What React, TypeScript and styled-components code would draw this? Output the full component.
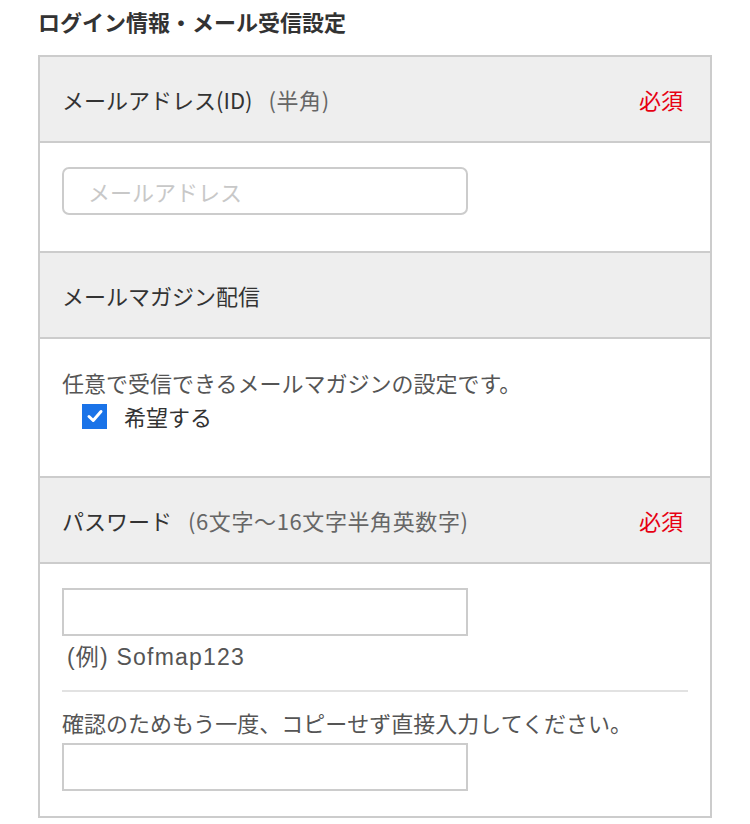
import React from "react";
import styled, { createGlobalStyle } from "styled-components";

const Global = createGlobalStyle`
  html, body { margin: 0; padding: 0; background: #fff; }
  body {
    font-family: "Noto Sans CJK JP", "Noto Sans", sans-serif;
    color: #333;
  }
  * { box-sizing: border-box; }
`;

const Page = styled.div`
  padding: 3px 38px 0 38px;
  width: 750px;
`;

const Title = styled.h2`
  margin: 0 0 16px 0;
  font-size: 22px;
  line-height: 36px;
  font-weight: 700;
  color: #333;
`;

const Box = styled.div`
  border: 2px solid #ccc;
  border-bottom: none;
`;

const Header = styled.div`
  display: flex;
  align-items: center;
  justify-content: space-between;
  height: 86px;
  padding: 0 27px 0 22px;
  background: #eeeeee;
  border-bottom: 2px solid #ccc;
  font-size: 22px;
  color: #333;
`;

const Sub = styled.span`
  color: #666;
  margin-left: 16px;
  letter-spacing: 0.6px;
`;

const Required = styled.span`
  color: #e60012;
  font-size: 22px;
`;

const Body = styled.div<{ $pt: number; $pb: number }>`
  padding: ${(p) => p.$pt}px 22px ${(p) => p.$pb}px 22px;
  border-bottom: 2px solid #ccc;
  background: #fff;
`;

const Input = styled.input<{ $rounded?: boolean }>`
  display: block;
  width: 406px;
  height: 48px;
  border: 2px solid #ccc;
  border-radius: ${(p) => (p.$rounded ? "7px" : "0")};
  padding: 0 24px;
  font-family: inherit;
  font-size: 22px;
  color: #333;
  background: #fff;
  outline: none;
  &::placeholder { color: #c8c8c8; }
`;

const Text = styled.p`
  margin: 0;
  font-size: 22px;
  line-height: 32px;
  color: #555;
`;

const CheckRow = styled.label`
  display: flex;
  align-items: center;
  gap: 17px;
  margin: 2px 0 0 20px;
  font-size: 22px;
  line-height: 32px;
  color: #333;
`;

const CheckBox = styled.span`
  width: 25px;
  height: 25px;
  background: #1a73e8;
  display: inline-flex;
  align-items: center;
  justify-content: center;
`;

const Example = styled.p`
  margin: 6px 0 0 5px;
  font-family: "Liberation Sans", "Noto Sans CJK JP", sans-serif;
  font-size: 23px;
  letter-spacing: 1.2px;
  line-height: 30px;
  color: #555;
`;

const Divider = styled.hr`
  border: none;
  border-top: 2px solid #e2e2e2;
  margin: 18px 0 14px 0;
  width: 626px;
`;

const ConfirmText = styled.p`
  margin: 0 0 5px 0;
  font-size: 22px;
  line-height: 32px;
  color: #555;
`;

export default function App() {
  return (
    <>
      <Global />
      <Page>
        <Title>ログイン情報・メール受信設定</Title>
        <Box>
          <Header>
            <span>
              メールアドレス(ID)<Sub>(半角)</Sub>
            </span>
            <Required>必須</Required>
          </Header>
          <Body $pt={24} $pb={36}>
            <Input $rounded placeholder="メールアドレス" />
          </Body>
          <Header>
            <span>メールマガジン配信</span>
          </Header>
          <Body $pt={27} $pb={44}>
            <Text>任意で受信できるメールマガジンの設定です。</Text>
            <CheckRow>
              <CheckBox>
                <svg width="18" height="18" viewBox="0 0 18 18">
                  <path d="M3 9.5 L7.2 13.5 L15 4.5" fill="none" stroke="#fff" strokeWidth="3" strokeLinecap="round" strokeLinejoin="round" />
                </svg>
              </CheckBox>
              希望する
            </CheckRow>
          </Body>
          <Header>
            <span>
              パスワード<Sub>(6文字～16文字半角英数字)</Sub>
            </span>
            <Required>必須</Required>
          </Header>
          <Body $pt={24} $pb={25}>
            <Input type="password" />
            <Example>(例) Sofmap123</Example>
            <Divider />
            <ConfirmText>確認のためもう一度、コピーせず直接入力してください。</ConfirmText>
            <Input type="password" />
          </Body>
        </Box>
      </Page>
    </>
  );
}
